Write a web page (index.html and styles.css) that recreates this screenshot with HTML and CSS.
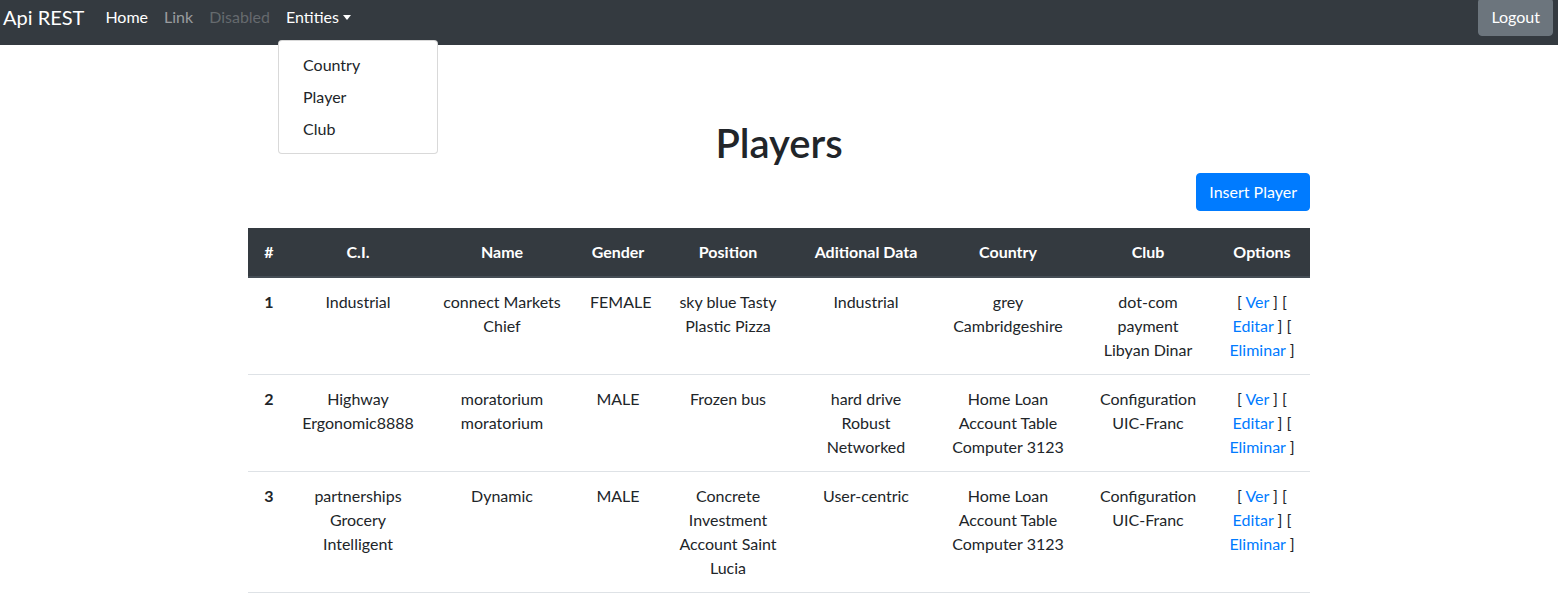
FILE: index.html
```html
<!DOCTYPE html>
<html lang="en">
<head>
<meta charset="utf-8">
<title>Api REST</title>
<link rel="stylesheet" href="styles.css">
</head>
<body>
<nav class="navbar">
  <a class="brand" href="#">Api REST</a>
  <ul class="nav">
    <li><a class="nav-link active" href="#">Home</a></li>
    <li><a class="nav-link" href="#">Link</a></li>
    <li><a class="nav-link disabled" href="#">Disabled</a></li>
    <li class="dropdown">
      <a class="nav-link active toggle" href="#">Entities<span class="caret"></span></a>
      <div class="dropdown-menu">
        <a class="dropdown-item" href="#">Country</a>
        <a class="dropdown-item" href="#">Player</a>
        <a class="dropdown-item" href="#">Club</a>
      </div>
    </li>
  </ul>
  <button class="btn btn-secondary logout">Logout</button>
</nav>

<main class="container">
  <h1 class="title">Players</h1>
  <div class="actions">
    <button class="btn btn-primary">Insert Player</button>
  </div>
  <table class="table">
    <colgroup>
      <col class="c1"><col class="c2"><col class="c3"><col class="c4"><col class="c5"><col class="c6"><col class="c7"><col class="c8"><col class="c9">
    </colgroup>
    <thead>
      <tr>
        <th>#</th><th>C.I.</th><th>Name</th><th>Gender</th><th>Position</th><th>Aditional Data</th><th>Country</th><th>Club</th><th>Options</th>
      </tr>
    </thead>
    <tbody>
      <tr>
        <th>1</th>
        <td>Industrial</td>
        <td>connect Markets Chief</td>
        <td>FEMALE</td>
        <td>sky blue Tasty Plastic Pizza</td>
        <td>Industrial</td>
        <td>grey Cambridgeshire</td>
        <td>dot-com payment Libyan Dinar</td>
        <td>[ <a href="#">Ver</a> ] [ <a href="#">Editar</a> ] [ <a href="#">Eliminar</a> ]</td>
      </tr>
      <tr>
        <th>2</th>
        <td>Highway Ergonomic8888</td>
        <td>moratorium moratorium</td>
        <td>MALE</td>
        <td>Frozen bus</td>
        <td>hard drive Robust Networked</td>
        <td>Home Loan Account Table Computer 3123</td>
        <td>Configuration UIC-Franc</td>
        <td>[ <a href="#">Ver</a> ] [ <a href="#">Editar</a> ] [ <a href="#">Eliminar</a> ]</td>
      </tr>
      <tr>
        <th>3</th>
        <td>partnerships Grocery Intelligent</td>
        <td>Dynamic</td>
        <td>MALE</td>
        <td>Concrete Investment Account Saint Lucia</td>
        <td>User-centric</td>
        <td>Home Loan Account Table Computer 3123</td>
        <td>Configuration UIC-Franc</td>
        <td>[ <a href="#">Ver</a> ] [ <a href="#">Editar</a> ] [ <a href="#">Eliminar</a> ]</td>
      </tr>
    </tbody>
  </table>
</main>
</body>
</html>
```

FILE: styles.css
```css
* { box-sizing: border-box; }

body {
  margin: 0;
  font-family: Lato, "Noto Sans", sans-serif;
  font-size: 16px;
  line-height: 24px;
  color: #212529;
  background: #fff;
}

a { text-decoration: none; color: #007bff; }

.navbar {
  height: 45px;
  background: #343a40;
  display: flex;
  align-items: flex-start;
  padding: 0 5px 0 3px;
}

.brand {
  color: #fff;
  font-size: 20px;
  line-height: 30px;
  padding-top: 2px;
  margin-right: 13px;
}

.nav {
  list-style: none;
  margin: 0;
  padding: 0;
  display: flex;
  flex: 1;
}

.nav-link {
  display: block;
  padding: 5px 8px;
  color: rgba(255,255,255,.5);
}

.nav-link.active { color: #fff; }
.nav-link.disabled { color: rgba(255,255,255,.25); }

.caret {
  display: inline-block;
  margin-left: 4px;
  vertical-align: 3px;
  border-top: 5px solid currentColor;
  border-left: 4.5px solid transparent;
  border-right: 4.5px solid transparent;
}

.dropdown { position: relative; }

.dropdown-menu {
  position: absolute;
  top: 40px;
  left: 0;
  z-index: 10;
  width: 160px;
  padding: 8px 0;
  background: #fff;
  border: 1px solid rgba(0,0,0,.15);
  border-radius: 4px;
}

.dropdown-item {
  display: block;
  padding: 4px 24px;
  color: #212529;
}

.btn {
  font-family: inherit;
  font-size: 16px;
  line-height: 24px;
  padding: 6px 12px;
  border: 1px solid transparent;
  border-radius: 4px;
  color: #fff;
  cursor: pointer;
}

.btn-secondary { background: #6c757d; border-color: #6c757d; }
.btn-primary { background: #007bff; border-color: #007bff; }

.logout { margin-top: -2px; }

.container {
  width: 1062px;
  margin: 0 auto;
  padding-top: 74px;
}

.title {
  margin: 0;
  text-align: center;
  font-size: 40px;
  line-height: 48px;
  font-weight: 600;
}

.actions {
  display: flex;
  justify-content: flex-end;
  margin-top: 6px;
  margin-bottom: 17px;
}

.table {
  width: 100%;
  border-collapse: collapse;
  table-layout: fixed;
}

.c1 { width: 42px; }
.c2 { width: 136px; }
.c3 { width: 152px; }
.c4 { width: 80px; }
.c5 { width: 140px; }
.c6 { width: 136px; }
.c7 { width: 148px; }
.c8 { width: 132px; }
.c9 { width: 96px; }

.table th, .table td {
  padding: 12px;
  text-align: center;
  vertical-align: top;
  border-top: 1px solid #dee2e6;
}

.table thead th {
  background: #343a40;
  color: #fff;
  border-top: 0;
  border-bottom: 2px solid #454d55;
  font-weight: 700;
}

.table tbody tr:last-child th,
.table tbody tr:last-child td { border-bottom: 1px solid #dee2e6; }
```
